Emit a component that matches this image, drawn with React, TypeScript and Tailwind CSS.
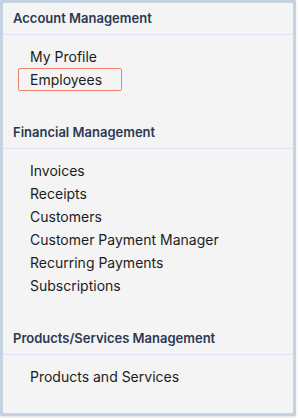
const sections = [
  {
    title: "Account Management",
    items: ["My Profile", "Employees"],
  },
  {
    title: "Financial Management",
    items: [
      "Invoices",
      "Receipts",
      "Customers",
      "Customer Payment Manager",
      "Recurring Payments",
      "Subscriptions",
    ],
  },
  {
    title: "Products/Services Management",
    items: ["Products and Services"],
  },
];

export default function App() {
  return (
    <div className="w-[298px] h-[418px] bg-white font-['Inter',sans-serif]">
      <div className="w-[296px] border-[3px] border-[#c5d3e0] bg-[#f4f4f4] shadow-sm">
        {sections.map((section, i) => (
          <div key={section.title}>
            {/* Section header */}
            <div className="h-[32px] flex items-center pl-[10px] border-b border-[#dde6f6] text-[13px] font-semibold text-[#2b3852]">
              {section.title}
            </div>
            <ul
              className={
                i === sections.length - 1
                  ? "pt-[10px] pb-[25px]"
                  : "pt-[10px] pb-[26px]"
              }>
              {section.items.map((item) => (
                <li key={item}>
                  {item === "Employees" ? (
                    <span className="ml-[15px] block w-[104px] border border-[#f3806f] rounded-[2px] pl-[11px] text-[14px] leading-[21px] text-[#1c1c1c]">
                      {item}
                    </span>
                  ) : (
                    <span className="block pl-[27px] text-[14px] leading-[23px] text-[#1c1c1c]">
                      {item}
                    </span>
                  )}
                </li>
              ))}
            </ul>
          </div>
        ))}
      </div>
    </div>
  );
}
